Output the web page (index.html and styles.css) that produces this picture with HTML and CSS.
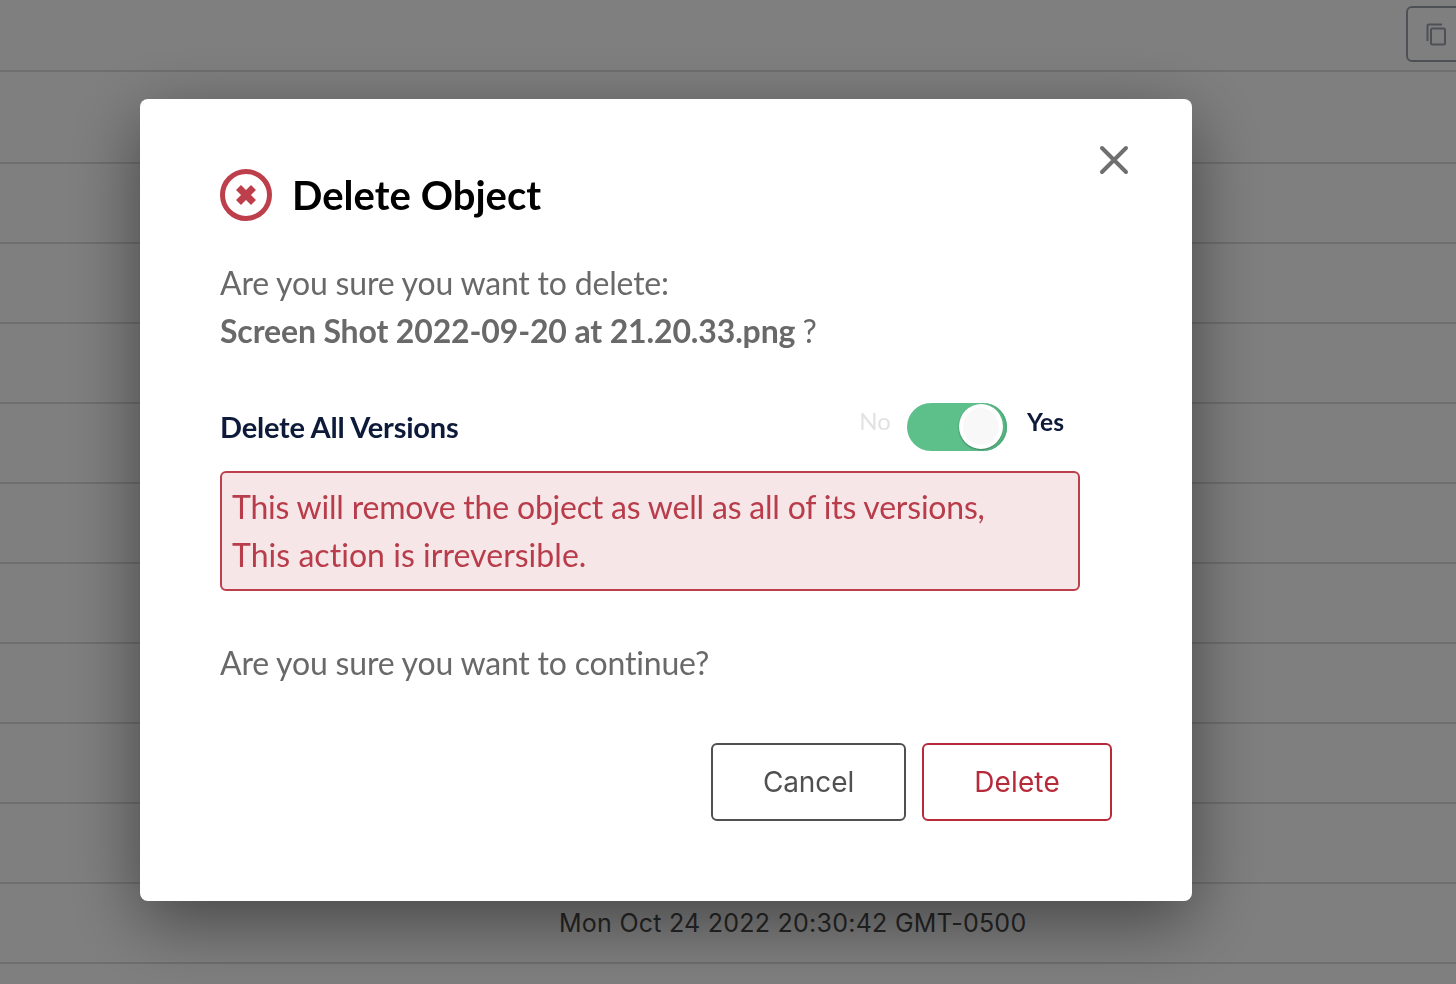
FILE: index.html
```html
<!DOCTYPE html>
<html lang="en">
<head>
<meta charset="utf-8">
<title>Delete Object</title>
<link rel="stylesheet" href="styles.css">
</head>
<body>
<main class="table">
  <div class="row row-first">
    <button class="copy-btn" aria-label="Copy">
      <svg width="24" height="24" viewBox="0 0 24 24" fill="none" stroke="currentColor" stroke-width="2"><path d="M2.5 19V3.5a1 1 0 0 1 1-1H17"/><rect x="6" y="6.5" width="14" height="16" rx="1.5"/></svg>
    </button>
  </div>
  <div class="row row-tall"></div>
  <div class="row"></div>
  <div class="row"></div>
  <div class="row"></div>
  <div class="row"></div>
  <div class="row"></div>
  <div class="row"></div>
  <div class="row"></div>
  <div class="row"></div>
  <div class="row"></div>
  <div class="row row-date"><span>Mon Oct 24 2022 20:30:42 GMT-0500</span></div>
  <div class="row"></div>
</main>
<div class="overlay">
  <section class="modal" role="dialog" aria-labelledby="modal-title">
    <button class="close" aria-label="Close">
      <svg width="32" height="32" viewBox="0 0 32 32" fill="none" stroke="currentColor" stroke-width="4" stroke-linecap="round"><path d="M4 4l24 24M28 4L4 28"/></svg>
    </button>
    <header class="title-row">
      <svg class="title-icon" width="52" height="52" viewBox="0 0 52 52" fill="none"><circle cx="26" cy="26" r="23.5" stroke="#bd3f4b" stroke-width="5"/><path d="M18.5 18.5l15 15M33.5 18.5l-15 15" stroke="#bd3f4b" stroke-width="7"/></svg>
      <h1 id="modal-title" class="title">Delete Object</h1>
    </header>
    <p class="text">Are you sure you want to delete:</p>
    <p class="text"><strong>Screen Shot 2022-09-20 at 21.20.33.png</strong><span class="qmark"> ?</span></p>
    <div class="versions">
      <span class="versions-label">Delete All Versions</span>
      <div class="switch-group">
        <span class="switch-no">No</span>
        <span class="switch"><span class="knob"></span></span>
        <span class="switch-yes">Yes</span>
      </div>
    </div>
    <div class="warning">
      <span class="warning-long">This will remove the object as well as all of its versions,</span><br>
      <span class="warning-short">This action is irreversible.</span>
    </div>
    <p class="text continue">Are you sure you want to continue?</p>
    <footer class="actions">
      <button class="btn btn-cancel">Cancel</button>
      <button class="btn btn-delete">Delete</button>
    </footer>
  </section>
</div>
</body>
</html>
```
FILE: styles.css
```css
* { box-sizing: border-box; }
html, body { margin: 0; height: 100%; overflow: hidden; background: #fff; }
body { font-family: "Lato", "Liberation Sans", sans-serif; }

.table { display: flex; flex-direction: column; height: 984px; overflow: hidden; }
.row { flex: 0 0 80px; border-bottom: 2px solid #dedede; display: flex; }
.row-first { flex-basis: 72px; justify-content: flex-end; align-items: flex-start; padding-top: 6px; }
.row-tall { flex-basis: 92px; }
.row-date { justify-content: flex-start; align-items: center; padding-left: 559px; font-family: "Inter", sans-serif; font-size: 25px; color: #4c4c4c; letter-spacing: 0.25px; }
.copy-btn { width: 80px; height: 56px; margin-right: -30px; flex: none; padding: 0 0 0 17px; display: flex; align-items: center; color: #9aa3ad; background: #fff; border: 2px solid #9aa3ad; border-radius: 6px; }

.overlay { position: fixed; inset: 0; background: rgba(0,0,0,.5); }
.modal { position: absolute; left: 140px; top: 99px; width: 1052px; height: 802px; padding: 70px 80px 0; background: #fff; border-radius: 8px; box-shadow: 0 20px 70px rgba(0,0,0,.46); }
.close { position: absolute; left: 958px; top: 45px; width: 32px; height: 32px; padding: 0; display: flex; border: 0; background: none; color: #6f6f6f; }
.title-row { display: flex; align-items: center; gap: 20px; height: 52px; margin-bottom: 38px; }
.title-icon { flex: none; }
.title { margin: 0; font-size: 40px; font-weight: 700; color: #000; letter-spacing: 0.03px; }
.text { margin: 0; font-size: 32px; line-height: 48px; color: #696969; letter-spacing: -0.19px; }
.text strong { font-weight: 700; letter-spacing: -0.14px; }
.qmark { letter-spacing: -1px; }
.versions { display: flex; justify-content: space-between; align-items: flex-start; width: 844px; height: 68px; margin-top: 48px; }
.versions-label { font-size: 29px; line-height: 48px; font-weight: 700; color: #0e1a3a; letter-spacing: -0.22px; }
.switch-group { display: flex; align-items: flex-start; gap: 16px; }
.switch-no, .switch-yes { font-size: 24px; line-height: 37px; }
.switch-no { color: #e2e2e2; line-height: 36px; }
.switch-yes { color: #0e1a3a; font-weight: 700; font-size: 24.6px; margin-left: 4px; }
.switch { position: relative; width: 100px; height: 48px; border-radius: 24px; background: #5dc08b; box-shadow: inset -2px 0 0 #4dab7a; display: block; }
.knob { position: absolute; right: 4px; top: 1px; width: 44px; height: 45px; border-radius: 50%; background: #f8f8f8; border: 4px solid #fff; box-shadow: 0 1px 2px rgba(0,0,0,.35); }
.warning { width: 860px; height: 120px; padding: 10px; font-size: 32px; line-height: 48px; color: #b83c4a; background: #f6e6e8; border: 2px solid #bd3f4b; border-radius: 6px; }
.warning-long { letter-spacing: -0.2px; }
.warning-short { letter-spacing: 0.04px; }
.continue { margin-top: 48px; }
.actions { display: flex; justify-content: flex-end; gap: 16px; margin-top: 56px; }
.btn { height: 78px; font-family: "Inter", sans-serif; font-size: 28px; background: #fff; border-radius: 6px; border: 2px solid; }
.btn-cancel { width: 195px; color: #505050; border-color: #505050; letter-spacing: -0.1px; }
.btn-delete { width: 190px; color: #b72a3a; border-color: #b72a3a; letter-spacing: 0.15px; }
```
